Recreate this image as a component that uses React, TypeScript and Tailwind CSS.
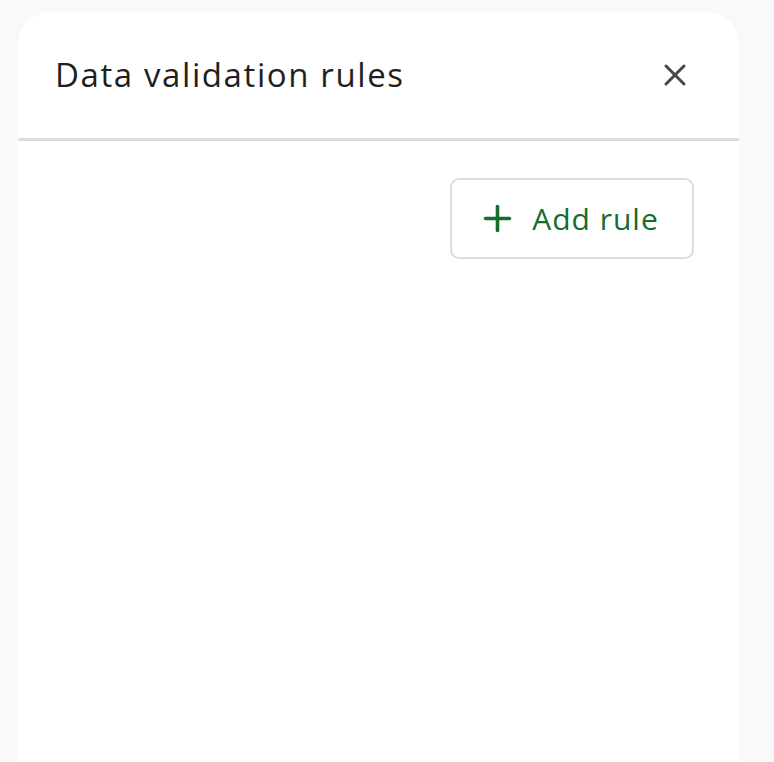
import { X, Plus } from 'lucide-react'

const App: React.FC = () => {
  return (
    <div className="min-h-screen w-[774px] h-[762px] overflow-hidden bg-[#f8f9fb] pt-3 pl-[18px] font-['Open_Sans',sans-serif]">
      <div className="w-[721px] h-[760px] bg-white rounded-t-[32px] flex flex-col">
        {/* header */}
        <div className="h-[126px] flex items-center justify-between pl-[37px] pr-[46px] pb-[1px]">
          <h2 className="text-[33px] text-[#1f1f1f] tracking-[1.6px]">Data validation rules</h2>
          <X className="w-[36px] h-[36px] text-[#444746]" strokeWidth={2} />
        </div>
        <div className="h-[3px] bg-[#dadce0]" />
        {/* actions */}
        <div className="flex justify-end pt-[37px] pr-[45px]">
          <button className="w-[244px] h-[81px] rounded-[9px] border-2 border-[#dadce0] flex items-center justify-center gap-[14px] text-[#146c2e] pr-[8px]">
            <Plus className="w-[41px] h-[41px]" strokeWidth={2.1} />
            <span className="text-[30px] font-medium tracking-[1px]">Add rule</span>
          </button>
        </div>
      </div>
    </div>
  )
}

export default App
